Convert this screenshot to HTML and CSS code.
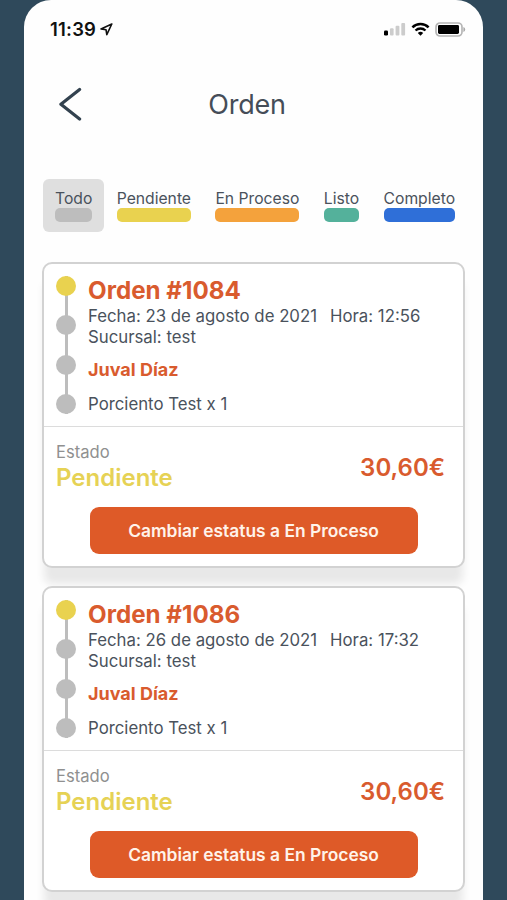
FILE: index.html
```html
<!DOCTYPE html>
<html lang="es">
<head>
  <meta charset="UTF-8">
  <meta name="viewport" content="width=device-width, initial-scale=1.0">
  <title>Orden</title>
  <link rel="stylesheet" href="styles.css">
</head>
<body>
  <div class="phone">
    <div class="status-bar">
      <div class="clock">
        <span>11:39</span>
        <svg class="location" width="13" height="13" viewBox="0 0 13 13">
          <path d="M11.8 1 L1 5.9 L6 6.7 L6.8 11.6 Z" fill="none" stroke="#111" stroke-width="1.6" stroke-linejoin="round"/>
        </svg>
      </div>
      <div class="indicators">
        <svg width="22" height="14" viewBox="0 0 22 14">
          <rect x="0" y="8.5" width="4" height="5" rx="1.2" fill="#000"/>
          <rect x="6" y="6.3" width="3.6" height="7.2" rx="1" fill="#ccc"/>
          <rect x="11.6" y="3.8" width="3.8" height="9.7" rx="1" fill="#ccc"/>
          <rect x="17.3" y="1" width="3.8" height="12.5" rx="1" fill="#ccc"/>
        </svg>
        <svg class="wifi" width="19" height="14" viewBox="0 0 19 14">
          <path d="M1.4 5.3 A11.6 11.6 0 0 1 17.6 5.3" fill="none" stroke="#000" stroke-width="2.5"/>
          <path d="M4.5 8.5 A7.2 7.2 0 0 1 14.5 8.5" fill="none" stroke="#000" stroke-width="2.3"/>
          <path d="M9.5 13.8 L6.8 11.1 A3.9 3.9 0 0 1 12.2 11.1 Z" fill="#000"/>
        </svg>
        <svg class="battery" width="31" height="15" viewBox="0 0 31 15">
          <rect x="1" y="1" width="26" height="13" rx="4" fill="#fff" stroke="#b5b5b5" stroke-width="1.7"/>
          <rect x="3" y="3" width="21" height="9" rx="1.4" fill="#000"/>
          <path d="M28.4 5 C30.8 6 30.8 9 28.4 10 Z" fill="#a8a8a8"/>
        </svg>
      </div>
    </div>

    <div class="header">
      <svg class="back" width="24" height="34" viewBox="0 0 24 34">
        <path d="M21.6 2.4 L2.9 17.2 L21.6 32" fill="none" stroke="#33424f" stroke-width="3.2" stroke-linecap="round" stroke-linejoin="round"/>
      </svg>
      <h1>Orden</h1>
    </div>

    <div class="tabs">
      <div class="tab active"><span>Todo</span><i class="bar gray"></i></div>
      <div class="tab"><span>Pendiente</span><i class="bar yellow"></i></div>
      <div class="tab"><span>En Proceso</span><i class="bar orange"></i></div>
      <div class="tab"><span>Listo</span><i class="bar green"></i></div>
      <div class="tab"><span>Completo</span><i class="bar blue"></i></div>
    </div>

    <div class="orders">
      <div class="card">
        <div class="info">
          <div class="steps">
            <div class="dot current"></div>
            <div class="dot"></div>
            <div class="dot"></div>
            <div class="dot"></div>
          </div>
          <div class="details">
            <h2>Orden #1084</h2>
            <p class="date"><span>Fecha: 23 de agosto de 2021</span><span>Hora: 12:56</span></p>
            <p>Sucursal: test</p>
            <p class="client">Juval Díaz</p>
            <p class="item">Porciento Test x 1</p>
          </div>
        </div>
        <div class="summary">
          <div>
            <p class="label">Estado</p>
            <p class="state">Pendiente</p>
          </div>
          <div class="price">30,60€</div>
        </div>
        <button class="change">Cambiar estatus a En Proceso</button>
      </div>

      <div class="card">
        <div class="info">
          <div class="steps">
            <div class="dot current"></div>
            <div class="dot"></div>
            <div class="dot"></div>
            <div class="dot"></div>
          </div>
          <div class="details">
            <h2>Orden #1086</h2>
            <p class="date"><span>Fecha: 26 de agosto de 2021</span><span>Hora: 17:32</span></p>
            <p>Sucursal: test</p>
            <p class="client">Juval Díaz</p>
            <p class="item">Porciento Test x 1</p>
          </div>
        </div>
        <div class="summary">
          <div>
            <p class="label">Estado</p>
            <p class="state">Pendiente</p>
          </div>
          <div class="price">30,60€</div>
        </div>
        <button class="change">Cambiar estatus a En Proceso</button>
      </div>
    </div>
  </div>
</body>
</html>
```

FILE: styles.css
```css
* {
  box-sizing: border-box;
  margin: 0;
  padding: 0;
}

body {
  height: 900px;
  padding: 0 24px;
  font-family: 'Inter', sans-serif;
  background: #2f495b;
  color: #4a525c;
  overflow: hidden;
  white-space: nowrap;
}

.phone {
  width: 459px;
  height: 900px;
  background: #fefefe;
  border-radius: 27px 27px 0 0;
  overflow: hidden;
}

.status-bar {
  display: flex;
  justify-content: space-between;
  height: 58px;
  padding: 0 17px 0 26px;
  align-items: center;
}

.clock {
  display: flex;
  align-items: center;
  gap: 4px;
  font-size: 18.5px;
  font-weight: 600;
  letter-spacing: 0.2px;
  color: #111;
}

.indicators {
  display: flex;
  align-items: center;
}

.wifi {
  margin-left: 5px;
}

.battery {
  margin-left: 5px;
}

.header {
  display: grid;
  grid-template-columns: 58px 1fr 62px;
  align-items: center;
  height: 92px;
}

.back {
  justify-self: end;
}

h1 {
  text-align: center;
  font-size: 27px;
  font-weight: 400;
  letter-spacing: -0.2px;
  color: #454d58;
  padding-right: 9px;
}

.tabs {
  display: flex;
  gap: 0.4px;
  margin-top: 29px;
  padding-left: 19px;
  height: 53px;
}

.tab {
  padding: 10px 12px 0;
  height: 53px;
  border-radius: 6px;
  font-size: 15.7px;
  line-height: 19px;
}

.tab span {
  display: block;
}

.active {
  background: #dfdfdf;
}

.bar {
  display: block;
  height: 14px;
  border-radius: 5px;
}

.gray {
  background: #bdbdbd;
}

.yellow {
  background: #e9d24f;
}

.orange {
  background: #f4a23c;
}

.green {
  background: #54b19b;
}

.blue {
  background: #2f6fd8;
}

.orders {
  display: flex;
  flex-direction: column;
  gap: 18px;
  padding: 30px 18px 0 18px;
}

.card {
  flex: none;
  width: 423px;
  height: 306px;
  background: #fff;
  border: 2px solid #d2d2d2;
  border-radius: 10px;
  box-shadow: 0 18px 8px -2px #e8e8e8;
}

.info {
  display: flex;
  height: 163px;
  padding: 12px 0 0 12px;
  border-bottom: 1px solid #dcdcdc;
}

.steps {
  display: flex;
  flex-direction: column;
  justify-content: space-between;
  width: 20px;
  height: 138px;
  background: linear-gradient(#bdbdbd, #bdbdbd) center / 3px 100% no-repeat;
}

.dot {
  width: 20px;
  height: 20px;
  border-radius: 50%;
  background: #bdbdbd;
}

.current {
  background: #e9d24f;
}

.details {
  padding-left: 12px;
  font-size: 16.8px;
  line-height: 21px;
}

h2 {
  font-size: 24.2px;
  font-weight: 700;
  line-height: 30px;
  color: #d95b2e;
}

.date {
  display: flex;
  gap: 13px;
}

.client {
  margin-top: 11px;
  font-size: 18px;
  font-weight: 700;
  color: #d95b2e;
}

.item {
  margin-top: 14px;
}

.summary {
  display: flex;
  justify-content: space-between;
  align-items: center;
  height: 80px;
  padding: 0 18px 0 12px;
}

.label {
  font-size: 16.6px;
  line-height: 23px;
  color: #909090;
}

.state {
  margin-bottom: 2px;
  font-size: 24px;
  font-weight: 600;
  line-height: 27px;
  color: #e6d255;
}

.price {
  font-size: 24px;
  font-weight: 600;
  color: #d95b2e;
}

.change {
  display: block;
  width: 328px;
  height: 47px;
  margin: 0 auto;
  border: none;
  border-radius: 9px;
  background: #de5a28;
  color: #fff3ea;
  font-family: inherit;
  font-size: 17.4px;
  font-weight: 600;
  cursor: pointer;
}
```
